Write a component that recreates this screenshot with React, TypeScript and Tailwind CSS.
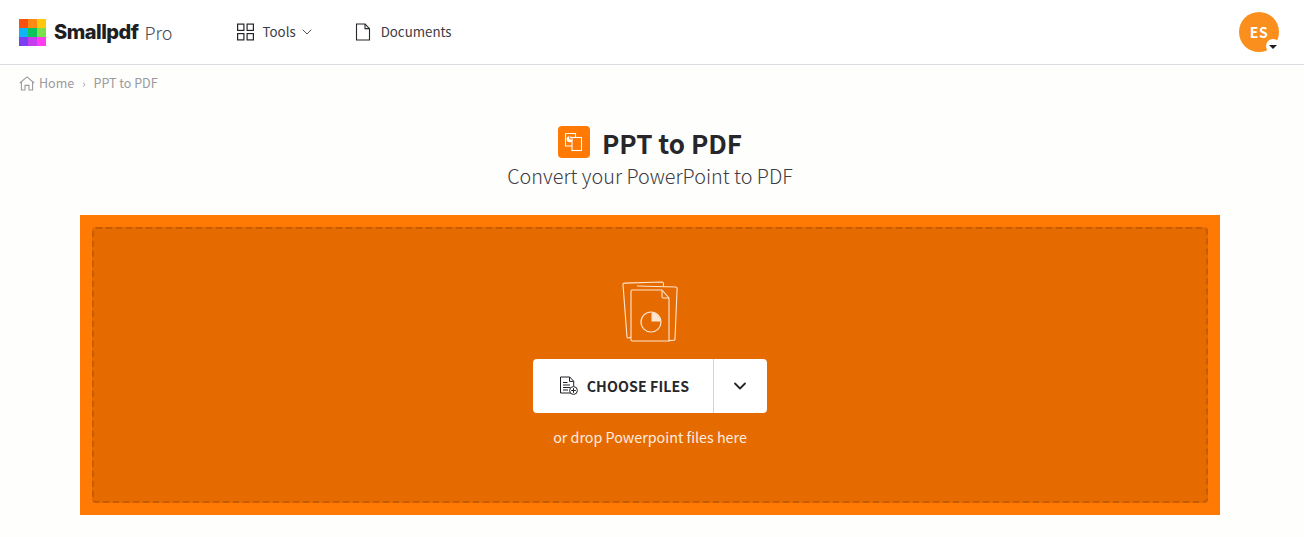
import { ChevronDown } from 'lucide-react';

const sans = "font-['Noto_Sans_CJK_JP','Source_Sans_Pro',sans-serif]";

const logoColors = [
    'bg-[#ff4f0f]',
    'bg-[#ff8a14]',
    'bg-[#ffc80f]',
    'bg-[#0fb4f5]',
    'bg-[#0cc45c]',
    'bg-[#7be04a]',
    'bg-[#7a3ff0]',
    'bg-[#c63cf0]',
    'bg-[#ff3cf0]',
];

function Logo() {
    return (
        <div className="flex items-center">
            <div className="grid grid-cols-3 grid-rows-3 w-[27px] h-[27px]">
                {logoColors.map(color => (
                    <div key={color} className={color} />
                ))}
            </div>
            <span className="ml-2 text-[20px] leading-none font-extrabold tracking-[-0.5px] text-[#1f1f23] font-['Inter',sans-serif]">
                Smallpdf
            </span>
            <span className={`ml-[6px] text-[18px] leading-none font-extralight text-[#4a4a50] ${sans}`}>Pro</span>
        </div>
    );
}

function GridIcon() {
    return (
        <svg width="18" height="18" viewBox="0 0 18 18" fill="none" stroke="#26262b" strokeWidth="1.2">
            <rect x="0.6" y="1.1" width="6.3" height="6.3" />
            <rect x="10.1" y="1.1" width="6.3" height="6.3" />
            <rect x="0.6" y="10.6" width="6.3" height="6.3" />
            <rect x="10.1" y="10.6" width="6.3" height="6.3" />
        </svg>
    );
}

function DocIcon() {
    return (
        <svg width="16" height="18" viewBox="0 0 16 18" fill="none" stroke="#26262b" strokeWidth="1.1">
            <path d="M1.5 1h8.6l4.4 4.6V17h-13z" />
            <path d="M10 1v4.6h4.5" />
        </svg>
    );
}

function HomeIcon() {
    return (
        <svg width="16" height="15" viewBox="0 0 16 15" fill="none" stroke="#9a9a9e" strokeWidth="1.1">
            <path d="M0.8 7 8 0.9 15.2 7" />
            <path d="M2.4 6V14h3.6V9.4h4V14h3.6V6" />
        </svg>
    );
}

function TitleIcon() {
    return (
        <div className="flex items-center justify-center w-8 h-8 rounded-[4px] bg-[#ff7a05]">
            <svg width="20" height="20" viewBox="0 0 20 20" fill="none" stroke="white" strokeWidth="1.1">
                <path d="M1.5 1.5h10v4" />
                <path d="M1.5 1.5v12.5h6" />
                <rect x="8" y="5.5" width="9.5" height="13" />
                <circle cx="5.6" cy="7.2" r="3" fill="white" stroke="none" />
                <path d="M5.8 7V4M5.8 7h3" stroke="#ff7a05" strokeWidth="1" />
            </svg>
        </div>
    );
}

function FilesIllustration() {
    return (
        <svg width="60" height="62" viewBox="0 0 60 62" fill="none" stroke="#ffe6d0" strokeWidth="1.1" strokeLinejoin="round">
            <path d="M11 57 8.4 58c-.8.2-1.3-.2-1.4-1L3 4.6c0-1 .5-1.5 1.3-1.5L42 2c.9 0 1.4.5 1.4 1.3l.1 3" />
            <path d="M17 6 55.8 7c.9 0 1.3.5 1.3 1.3L55 59c0 .9-.5 1.3-1.3 1.3L49 60.6" />
            <path d="M11 11.2c0-.8.4-1.2 1.2-1.2H42l7 8v43H12.2c-.8 0-1.2-.4-1.2-1.2z" fill="#e56a00" />
            <path d="M42 10v6.6c0 .9.5 1.4 1.4 1.4H49" />
            <circle cx="31" cy="42" r="10" strokeWidth="1.2" />
            <path d="M31.5 32.4a9.6 9.6 0 0 1 9.1 9.1h-9.1z" fill="#ffe6d0" stroke="none" />
        </svg>
    );
}

function AddFileIcon() {
    return (
        <svg width="20" height="20" viewBox="0 0 20 20" fill="none" stroke="#1f1f23" strokeWidth="1">
            <path d="M11.2 17H1.5V1h9.2l4 4.2v5" />
            <path d="M10.5 1v4.4h4.2" />
            <path d="M4 6.5h4.5M4 9h7M4 11.5h7M4 14h5" />
            <circle cx="14.5" cy="14.5" r="3.9" />
            <path d="M14.5 12.2v4.6M12.2 14.5h4.6" />
        </svg>
    );
}

export default function App() {
    return (
        <div className={`h-[537px] bg-[#fefefd] overflow-hidden ${sans}`}>
            <header className="relative flex items-center h-[65px] pl-[19px] pr-[25px] border-b border-[#dcdce0] bg-white">
                <Logo />
                <nav className="flex items-center ml-[64px] text-[13.3px] text-[#3c3c42]">
                    <div className="flex items-center">
                        <GridIcon />
                        <span className="ml-[8px]">Tools</span>
                        <ChevronDown size={16} strokeWidth={1.2} className="ml-[3px] text-[#26262b]" />
                    </div>
                    <div className="flex items-center ml-[40px]">
                        <DocIcon />
                        <span className="ml-[10px]">Documents</span>
                    </div>
                </nav>
                <div className="relative flex items-center justify-center ml-auto w-10 h-10 rounded-full bg-[#fb8f1d] text-white text-[14px] font-bold tracking-[0.5px]">
                    ES
                    <div className="absolute right-[-1px] bottom-[-1px] flex items-center justify-center w-[14px] h-[14px] rounded-full bg-white">
                        <div className="w-0 h-0 mt-[2px] border-x-[4px] border-x-transparent border-t-[4px] border-t-[#1f1f23]" />
                    </div>
                </div>
            </header>

            <div className="flex items-center h-9 pl-[19px] text-[12.5px] text-[#9a9a9e]">
                <HomeIcon />
                <span className="ml-1">Home</span>
                <span className="mx-2 text-[11px]">›</span>
                <span>PPT to PDF</span>
            </div>

            <div className="w-[1300px]">
                <div className="flex flex-col items-center mt-[22px]">
                    <div className="flex items-center h-[38px]">
                        <TitleIcon />
                        <h1 className="ml-3 pt-[2px] text-[26px] font-semibold leading-none text-[#26262b]">PPT to PDF</h1>
                    </div>
                    <p className="mt-[1px] text-[19.8px] leading-[28px] font-light text-[#3c3c42]">
                        Convert your PowerPoint to PDF
                    </p>
                </div>

                <section className="mx-20 mt-[25px] h-[300px] p-3 bg-[#ff7a05]">
                    <div className="flex flex-col items-center h-full pt-[51px] rounded-[4px] border-2 border-dashed border-[#c65b00] bg-[#e56a00]">
                        <FilesIllustration />
                        <div className="flex items-stretch h-[54px] mt-[17px] rounded-[4px] bg-white">
                            <div className="flex items-center justify-center w-[181px] pl-[2px] border-r border-[#d4d4d6]">
                                <AddFileIcon />
                                <span className="ml-2 pt-[2px] text-[14.2px] font-bold tracking-[0.1px] text-[#26262b]">CHOOSE FILES</span>
                            </div>
                            <div className="flex items-center justify-center w-[53px] pr-[2px]">
                                <ChevronDown size={20} strokeWidth={2.2} className="text-[#26262b]" />
                            </div>
                        </div>
                        <p className="mt-[13px] text-[14.3px] leading-[22px] text-[#ffeee0]">or drop Powerpoint files here</p>
                    </div>
                </section>
            </div>
        </div>
    );
}
